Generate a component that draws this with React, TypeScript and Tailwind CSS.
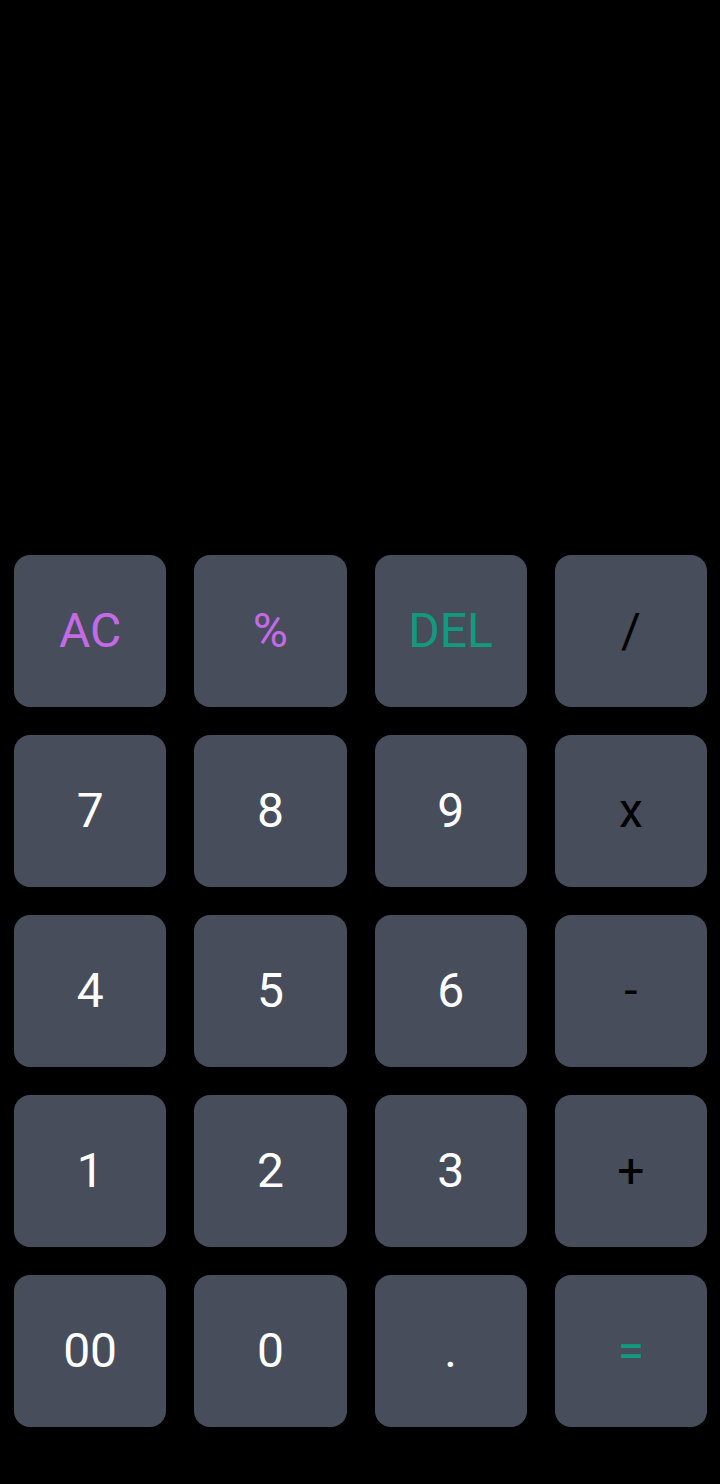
const keys: { label: string; color: string }[] = [
  { label: "AC", color: "text-[#c46ae6]" },
  { label: "%", color: "text-[#c46ae6]" },
  { label: "DEL", color: "text-[#119a7f]" },
  { label: "/", color: "text-black" },
  { label: "7", color: "text-white" },
  { label: "8", color: "text-white" },
  { label: "9", color: "text-white" },
  { label: "x", color: "text-black" },
  { label: "4", color: "text-white" },
  { label: "5", color: "text-white" },
  { label: "6", color: "text-white" },
  { label: "-", color: "text-black" },
  { label: "1", color: "text-white" },
  { label: "2", color: "text-white" },
  { label: "3", color: "text-white" },
  { label: "+", color: "text-black" },
  { label: "00", color: "text-white" },
  { label: "0", color: "text-white" },
  { label: ".", color: "text-white" },
  { label: "=", color: "text-[#119a7f]" },
];

export default function App() {
  return (
    <div className="h-screen bg-black flex flex-col justify-end pl-[14px] pr-[13px] pb-[57px] font-['Roboto',sans-serif]">
      <div className="grid grid-cols-4 gap-[28px]">
        {keys.map((k) => (
          <button
            key={k.label}
            className={`h-[152px] rounded-2xl bg-[#474d5a] flex items-center justify-center text-5xl leading-none ${k.color}`}
          >
            {k.label}
          </button>
        ))}
      </div>
    </div>
  );
}
